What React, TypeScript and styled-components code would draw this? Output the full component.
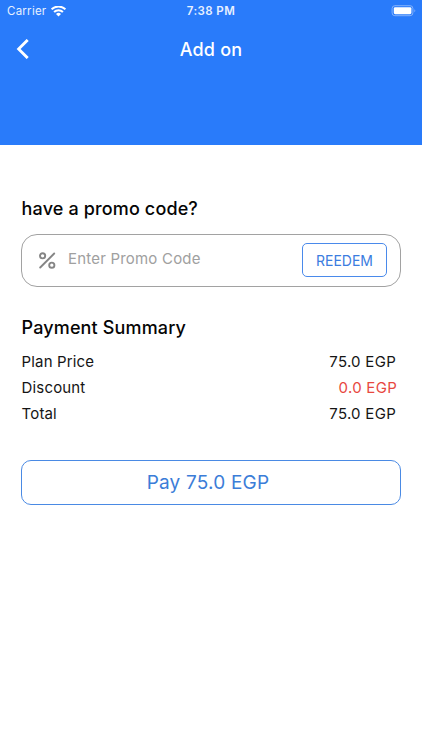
import React from "react";
import styled, { createGlobalStyle } from "styled-components";

const GlobalStyle = createGlobalStyle`
  *, *::before, *::after { box-sizing: border-box; }
  body { margin: 0; background: #fff; font-family: Inter, "Liberation Sans", sans-serif; }
  button, input { font-family: inherit; }
`;

const Screen = styled.div`
  width: 422px;
  height: 750px;
  background: #fff;
  overflow: hidden;
`;

const Header = styled.header`
  height: 145px;
  background: #297bfa;
  color: #fff;
`;

const StatusBar = styled.div`
  display: grid;
  grid-template-columns: 1fr auto 1fr;
  align-items: center;
  height: 22px;
  padding: 0 6px 0 7px;
`;

const Carrier = styled.div`
  display: flex;
  align-items: center;
  gap: 5px;
  font-size: 11.5px;
  line-height: 14px;
  letter-spacing: 0.25px;
  color: #e6f0ff;
`;

const Clock = styled.div`
  margin-right: 1px;
  font-size: 11.5px;
  line-height: 14px;
  font-weight: 600;
  letter-spacing: 0.42px;
  color: #e6f0ff;
`;

const BatterySlot = styled.div`
  display: flex;
  justify-content: flex-end;
`;

const NavBar = styled.div`
  display: grid;
  grid-template-columns: 60px 1fr 60px;
  align-items: center;
  height: 56px;
`;

const BackButton = styled.button`
  display: flex;
  width: 44px;
  height: 44px;
  padding: 11px 0 0 15px;
  border: 0;
  background: none;
  color: #fff;
`;

const Title = styled.h1`
  margin: 0;
  text-align: center;
  font-size: 18px;
  line-height: 24px;
  font-weight: 500;
  letter-spacing: 0.2px;
`;

const Content = styled.main`
  padding: 52px 21px 0;
`;

const Heading = styled.h2`
  margin: 0 0 0 0.6px;
  font-size: 18px;
  line-height: 24px;
  font-weight: 500;
  letter-spacing: 0.14px;
  color: #050505;
`;

const PromoField = styled.div`
  display: flex;
  align-items: center;
  height: 53px;
  margin: 13px 0 29px;
  padding: 0 13px 0 16px;
  border: 1px solid #a2a2a2;
  border-radius: 16px;
`;

const PromoInput = styled.input`
  flex: 1;
  min-width: 0;
  height: 24px;
  margin: 0 0 4px 12px;
  padding: 0;
  border: 0;
  outline: 0;
  background: none;
  font-size: 15px;
  letter-spacing: 0.2px;
  &::placeholder { color: #a0a0a0; opacity: 1; }
`;

const RedeemButton = styled.button`
  width: 85px;
  height: 34px;
  margin-bottom: 1px;
  padding: 2px 0 0;
  border: 1px solid #4a8aeb;
  border-radius: 5px;
  background: none;
  color: #3b7de0;
  font-size: 14px;
  line-height: 20px;
`;

const Summary = styled.dl`
  margin: 9px 5px 0 0.6px;
`;

const Row = styled.div`
  display: flex;
  justify-content: space-between;
  height: 26px;
  line-height: 26px;
  font-size: 15px;
  letter-spacing: 0.15px;
  color: #151515;
`;

const Label = styled.dt``;

const Amount = styled.dd<{ $discount?: boolean }>`
  margin: 0 ${(p) => (p.$discount ? "-1px" : "0")} 0 0;
  letter-spacing: 0.28px;
  color: ${(p) => (p.$discount ? "#e8483f" : "inherit")};
`;

const PayButton = styled.button`
  display: block;
  width: 380px;
  height: 45px;
  margin-top: 33px;
  padding: 0 6px 0 0;
  border: 1px solid #4a8ae4;
  border-radius: 10px;
  background: none;
  color: #3b7dd8;
  font-size: 19px;
  line-height: 28px;
  letter-spacing: 0.2px;
`;

const WifiIcon = () => (
  <svg width="15" height="11" viewBox="0 0 15 11" fill="none" stroke="#fff" strokeWidth="2">
    <path d="M.6 3.4a9.8 9.8 0 0 1 13.8 0" />
    <path d="M3.1 6a6.2 6.2 0 0 1 8.8 0" />
    <path d="M7.5 10.5 5 8a3.6 3.6 0 0 1 5 0Z" fill="#fff" stroke="none" />
  </svg>
);

const BatteryIcon = () => (
  <svg width="25" height="12" viewBox="0 0 25 12" fill="none">
    <rect x="1.1" y=".7" width="20.8" height="10" rx="2.8" stroke="#83b2fc" />
    <rect x="2.8" y="2.2" width="17.6" height="7" rx="1.4" fill="#fff" />
    <path d="M23.4 4.2v3c1.2-.6 1.2-2.4 0-3Z" fill="#83b2fc" />
  </svg>
);

const BackIcon = () => (
  <svg width="16" height="20" viewBox="0 0 16 20" fill="none" stroke="currentColor" strokeWidth="2.8">
    <path d="M12.7.9 3.6 10l9.1 9.1" />
  </svg>
);

const PercentIcon = () => (
  <svg width="18" height="18" viewBox="0 0 18 18" fill="none" stroke="#858585" strokeWidth="1.9">
    <circle cx="4.6" cy="3.8" r="2.6" />
    <circle cx="13.8" cy="13.2" r="2.6" />
    <path d="M16.2 1.5 2.2 15.5" strokeLinecap="round" />
  </svg>
);

const lines = [
  { label: "Plan Price", amount: "75.0 EGP" },
  { label: "Discount", amount: "0.0 EGP", discount: true },
  { label: "Total", amount: "75.0 EGP" },
];

export default function App() {
  return (
    <Screen>
      <GlobalStyle />
      <Header>
        <StatusBar>
          <Carrier>Carrier <WifiIcon /></Carrier>
          <Clock>7:38 PM</Clock>
          <BatterySlot><BatteryIcon /></BatterySlot>
        </StatusBar>
        <NavBar>
          <BackButton aria-label="Back"><BackIcon /></BackButton>
          <Title>Add on</Title>
        </NavBar>
      </Header>
      <Content>
        <Heading>have a promo code?</Heading>
        <PromoField>
          <PercentIcon />
          <PromoInput placeholder="Enter Promo Code" />
          <RedeemButton>REEDEM</RedeemButton>
        </PromoField>
        <Heading>Payment Summary</Heading>
        <Summary>
          {lines.map((line) => (
            <Row key={line.label}>
              <Label>{line.label}</Label>
              <Amount $discount={line.discount}>{line.amount}</Amount>
            </Row>
          ))}
        </Summary>
        <PayButton>Pay 75.0 EGP</PayButton>
      </Content>
    </Screen>
  );
}
